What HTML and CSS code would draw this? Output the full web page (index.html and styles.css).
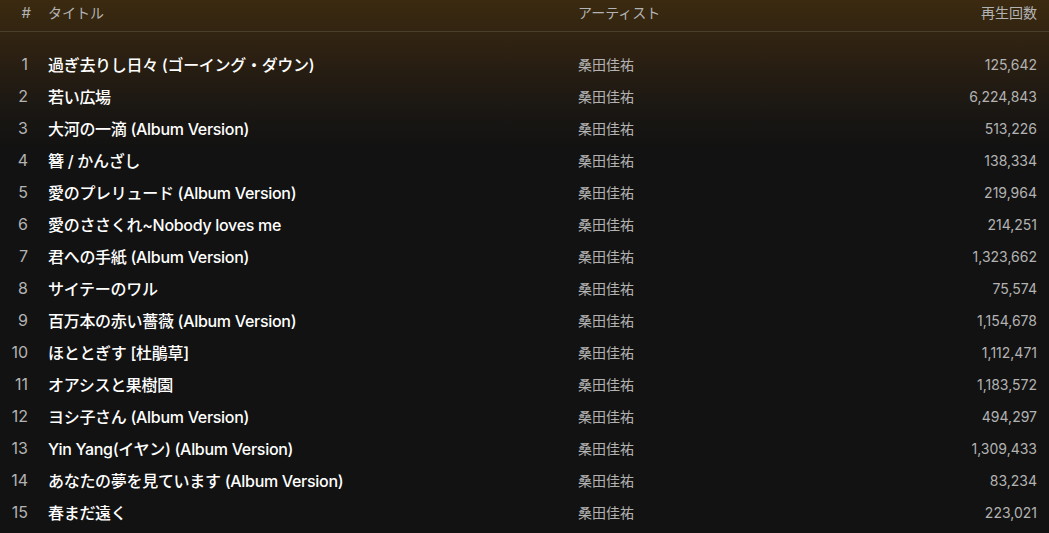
FILE: index.html
```html
<!DOCTYPE html>
<html lang="ja">
<head>
<meta charset="utf-8">
<link rel="stylesheet" href="styles.css">
</head>
<body>
<div class="tracklist">
  <div class="head">
    <div class="idx">#</div>
    <div>タイトル</div>
    <div>アーティスト</div>
    <div class="plays">再生回数</div>
  </div>
  <div class="rows">
    <div class="row"><div class="idx">1</div><div class="title">過ぎ去りし日々 (ゴーイング・ダウン)</div><div class="artist">桑田佳祐</div><div class="plays">125,642</div></div>
    <div class="row"><div class="idx">2</div><div class="title">若い広場</div><div class="artist">桑田佳祐</div><div class="plays">6,224,843</div></div>
    <div class="row"><div class="idx">3</div><div class="title">大河の一滴 (Album Version)</div><div class="artist">桑田佳祐</div><div class="plays">513,226</div></div>
    <div class="row"><div class="idx">4</div><div class="title">簪 / かんざし</div><div class="artist">桑田佳祐</div><div class="plays">138,334</div></div>
    <div class="row"><div class="idx">5</div><div class="title">愛のプレリュード (Album Version)</div><div class="artist">桑田佳祐</div><div class="plays">219,964</div></div>
    <div class="row"><div class="idx">6</div><div class="title">愛のささくれ~Nobody loves me</div><div class="artist">桑田佳祐</div><div class="plays">214,251</div></div>
    <div class="row"><div class="idx">7</div><div class="title">君への手紙 (Album Version)</div><div class="artist">桑田佳祐</div><div class="plays">1,323,662</div></div>
    <div class="row"><div class="idx">8</div><div class="title">サイテーのワル</div><div class="artist">桑田佳祐</div><div class="plays">75,574</div></div>
    <div class="row"><div class="idx">9</div><div class="title">百万本の赤い薔薇 (Album Version)</div><div class="artist">桑田佳祐</div><div class="plays">1,154,678</div></div>
    <div class="row"><div class="idx">10</div><div class="title">ほととぎす [杜鵑草]</div><div class="artist">桑田佳祐</div><div class="plays">1,112,471</div></div>
    <div class="row"><div class="idx">11</div><div class="title">オアシスと果樹園</div><div class="artist">桑田佳祐</div><div class="plays">1,183,572</div></div>
    <div class="row"><div class="idx">12</div><div class="title">ヨシ子さん (Album Version)</div><div class="artist">桑田佳祐</div><div class="plays">494,297</div></div>
    <div class="row"><div class="idx">13</div><div class="title">Yin Yang(イヤン) (Album Version)</div><div class="artist">桑田佳祐</div><div class="plays">1,309,433</div></div>
    <div class="row"><div class="idx">14</div><div class="title">あなたの夢を見ています (Album Version)</div><div class="artist">桑田佳祐</div><div class="plays">83,234</div></div>
    <div class="row"><div class="idx">15</div><div class="title">春まだ遠く</div><div class="artist">桑田佳祐</div><div class="plays">223,021</div></div>
  </div>
</div>
</body>
</html>
```
FILE: styles.css
```css
html, body {
  margin: 0;
  padding: 0;
  height: 100%;
}
body {
  background: #121212 linear-gradient(to bottom, #3b2a10 0px, #2a1f12 60px, #1a1713 110px, #121212 150px) no-repeat;
  font-family: Inter, "Noto Sans CJK JP", sans-serif;
  color: #fff;
  overflow: hidden;
}
.tracklist {
  display: flex;
  flex-direction: column;
}
.head, .row {
  display: grid;
  grid-template-columns: 20px 510px 1fr 120px;
  column-gap: 20px;
  align-items: center;
  padding: 0 12px 0 8px;
}
.head {
  height: 24px;
  padding-bottom: 7px;
  border-bottom: 1px solid rgba(255, 255, 255, 0.12);
  font-size: 14px;
  color: #b3b3b3;
}
.head .idx {
  text-align: right;
  margin-right: -3px;
  font-size: 15px;
}
.rows {
  padding-top: 16px;
  display: flex;
  flex-direction: column;
}
.row {
  height: 32px;
}
.idx {
  text-align: right;
  font-size: 16px;
  color: #b3b3b3;
}
.title {
  font-size: 16px;
  font-weight: 500;
  letter-spacing: -0.3px;
  color: #fff;
  white-space: nowrap;
}
.artist {
  font-size: 14px;
  color: #b3b3b3;
}
.plays {
  text-align: right;
  font-size: 14px;
  color: #b3b3b3;
}
```
